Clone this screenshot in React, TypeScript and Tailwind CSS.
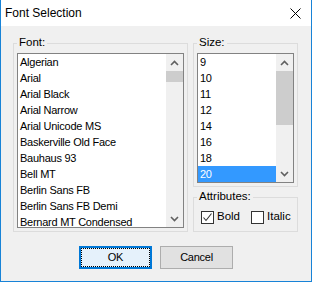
import React from "react";

const fonts = [
  "Algerian",
  "Arial",
  "Arial Black",
  "Arial Narrow",
  "Arial Unicode MS",
  "Baskerville Old Face",
  "Bauhaus 93",
  "Bell MT",
  "Berlin Sans FB",
  "Berlin Sans FB Demi",
  "Bernard MT Condensed",
];

const sizes = ["9", "10", "11", "12", "14", "16", "18", "20"];

const Chevron = ({ up }: { up?: boolean }) => (
  <svg width="9" height="6" viewBox="0 0 9 6">
    <polyline
      points={up ? "1,5 4.5,1.5 8,5" : "1,1 4.5,4.5 8,1"}
      fill="none"
      stroke="#606060"
      strokeWidth="1.6"
    />
  </svg>
);

const ScrollBar = ({ thumb }: { thumb: string }) => (
  <div className="flex h-full w-[17px] shrink-0 flex-col bg-[#f0f0f0]">
    <div className="flex h-[17px] items-center justify-center">
      <Chevron up />
    </div>
    <div className="flex-1">
      <div className={`${thumb} w-full bg-[#cdcdcd]`} />
    </div>
    <div className="flex h-[17px] items-center justify-center">
      <Chevron />
    </div>
  </div>
);

const GroupLabel = ({ text }: { text: string }) => (
  <span className="absolute left-[3px] top-[-8px] bg-[#f0f0f0] px-[2px] text-[11.5px] leading-[13px] tracking-normal">
    {text}
  </span>
);

const CheckBox = ({ label, checked }: { label: string; checked?: boolean }) => (
  <div className="flex items-center gap-[3px]">
    <div className="flex h-[13px] w-[13px] items-center justify-center border border-[#333333] bg-white">
      {checked && (
        <svg width="11" height="11" viewBox="0 0 11 11">
          <polyline points="1.5,5.5 4,8.5 9.5,1.5" fill="none" stroke="#333333" strokeWidth="1.1" />
        </svg>
      )}
    </div>
    <span className="text-[11.5px] tracking-normal">{label}</span>
  </div>
);

export default function App() {
  return (
    <div
      className="flex h-[282px] w-[312px] flex-col border-x border-b border-[#1883d7] bg-[#f0f0f0] text-[11px] tracking-[-0.25px] text-black"
      style={{ fontFamily: '"Liberation Sans", Arial, sans-serif' }}
    >
      {/* title bar */}
      <div className="flex h-[26px] shrink-0 items-center justify-between bg-white pl-[4px] pr-[10px]">
        <span className="text-[12px] tracking-normal">Font Selection</span>
        <svg width="11" height="11" viewBox="0 0 11 11">
          <path d="M0.5 0.5 L10.5 10.5 M10.5 0.5 L0.5 10.5" stroke="#000" strokeWidth="1" />
        </svg>
      </div>

      <div className="flex flex-1 flex-col pl-[12px] pt-[17px]">
        <div className="flex gap-[5px]">
          {/* Font group */}
          <div className="relative h-[189px] w-[175px] border border-[#dcdcdc] px-[3px] pb-[3px] pt-[9px]">
            <GroupLabel text="Font:" />
            <div className="flex h-full border border-[#828282] bg-white">
              <div className="flex-1 overflow-hidden">
                {fonts.map((f) => (
                  <div key={f} className="h-[16px] pl-[2px] leading-[16px] whitespace-nowrap">
                    {f}
                  </div>
                ))}
              </div>
              <ScrollBar thumb="h-[11px]" />
            </div>
          </div>

          {/* right column */}
          <div className="flex w-[105px] flex-col gap-[10px]">
            <div className="relative h-[144px] border border-[#dcdcdc] px-[3px] pb-[3px] pt-[9px]">
              <GroupLabel text="Size:" />
              <div className="flex h-full border border-[#828282] bg-white">
                <div className="flex-1 overflow-hidden">
                  {sizes.map((s) => (
                    <div
                      key={s}
                      className={`h-[16px] pl-[2px] leading-[16px] ${s === "20" ? "bg-[#3399ff] text-white" : ""}`}
                    >
                      {s}
                    </div>
                  ))}
                </div>
                <ScrollBar thumb="h-[54px]" />
              </div>
            </div>

            <div className="relative flex h-[35px] items-center gap-[11px] border border-[#dcdcdc] pl-[7px] pt-[5px]">
              <GroupLabel text="Attributes:" />
              <CheckBox label="Bold" checked />
              <CheckBox label="Italic" />
            </div>
          </div>
        </div>

        {/* buttons */}
        <div className="mt-[14px] flex justify-center gap-[8px] pr-[12px]">
          <button className="flex h-[23px] w-[73px] items-center justify-center border border-[#0078d7] bg-[#e5f1fb] p-[1px] shadow-[inset_0_0_0_1px_#0078d7]">
            <span className="flex h-full w-full items-center justify-center border border-dotted border-black">
              OK
            </span>
          </button>
          <button className="flex h-[23px] w-[73px] items-center justify-center border border-[#adadad] bg-[#e1e1e1]">
            Cancel
          </button>
        </div>
      </div>
    </div>
  );
}
